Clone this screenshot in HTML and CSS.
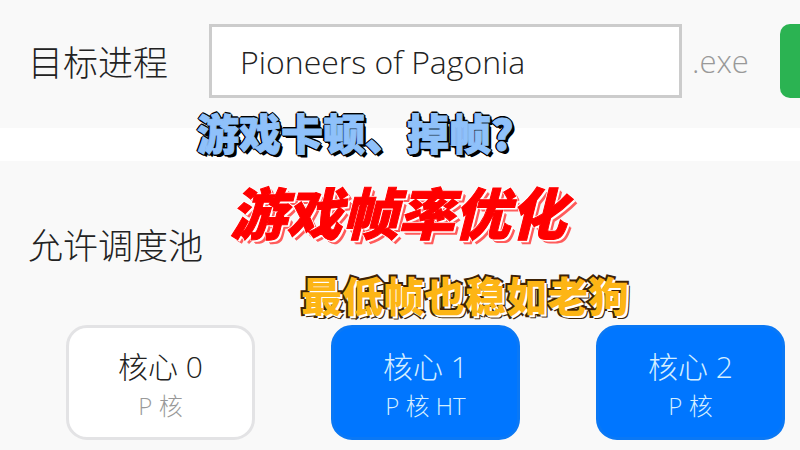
FILE: index.html
```html
<!DOCTYPE html>
<html lang="zh-CN">
<head>
  <meta charset="UTF-8" />
  <meta name="viewport" content="width=device-width, initial-scale=1.0"/>
  <title>游戏帧率优化</title>
  <link rel="stylesheet" href="styles.css">
</head>
<body>
  <div class="app-container">
    <!-- 目标进程 -->
    <form class="panel process-panel">
      <label class="panel-label" for="process-name">目标进程</label>
      <input type="text" id="process-name" class="process-input" value="Pioneers of Pagonia" />
      <span class="process-ext">.exe</span>
      <button type="button" class="btn-start" aria-label="启动"></button>
    </form>

    <!-- 调度池 -->
    <section class="panel pool-panel">
      <h2 class="panel-label">允许调度池</h2>
      <div class="core-list">
        <button type="button" class="core">
          <span class="core-name">核心 0</span>
          <span class="core-type">P 核</span>
        </button>
        <button type="button" class="core active">
          <span class="core-name">核心 1</span>
          <span class="core-type">P 核 HT</span>
        </button>
        <button type="button" class="core active">
          <span class="core-name">核心 2</span>
          <span class="core-type">P 核</span>
        </button>
      </div>
    </section>

    <!-- 标题文字 -->
    <p class="caption caption-question">游戏卡顿、掉帧?</p>
    <h1 class="caption caption-title">游戏帧率优化</h1>
    <p class="caption caption-sub">最低帧也稳如老狗</p>
  </div>
</body>
</html>
```
FILE: styles.css
```css
* { margin: 0; padding: 0; box-sizing: border-box; }
body {
  background-color: #fff;
  color: #222;
  font-family: "Open Sans", "Noto Sans CJK SC", sans-serif;
  font-weight: 300;
  overflow: hidden;
}
button, input { font: inherit; color: inherit; }

.app-container {
  position: relative;
  display: flex;
  flex-direction: column;
  gap: 33px;
  min-height: 100vh;
}

.panel { background-color: #f9f9f9; }

.panel-label {
  padding-top: 4px;
  font-size: 35px;
  line-height: 50px;
  font-weight: 300;
  white-space: nowrap;
}

/* 目标进程 */
.process-panel {
  display: flex;
  align-items: center;
  padding: 24px 0 30px 28px;
  overflow: hidden;
}
.process-input {
  flex: 1;
  min-width: 0;
  height: 74px;
  margin-left: 41px;
  padding: 0 28px;
  border: 3px solid #ccc;
  background: #fff;
  font-size: 32px;
}
.process-ext {
  width: 98px;
  padding-left: 10px;
  color: #999;
  font-size: 31px;
}
.btn-start {
  width: 40px;
  height: 74px;
  margin-right: -20px;
  border: none;
  border-radius: 10px;
  background-color: #2bb352;
}

/* 调度池 */
.pool-panel {
  flex: 1;
  padding: 56px 15px 10px 28px;
}
.core-list {
  display: grid;
  grid-template-columns: repeat(3, 1fr);
  gap: 76px;
  margin-top: 54px;
  padding-left: 38px;
}
.core {
  display: flex;
  flex-direction: column;
  align-items: center;
  justify-content: center;
  height: 115px;
  padding-top: 4px;
  border: 3px solid #e3e3e5;
  border-radius: 21px;
  background: #fff;
  cursor: pointer;
}
.core-name {
  font-size: 30px;
  line-height: 42px;
}
.core-type {
  color: #999;
  font-size: 24px;
  line-height: 36px;
}
.core.active {
  border-color: #0a78f5;
  background: #0076ff;
  color: #d5efff;
}
.core.active .core-type { color: #d5efff; }

/* 浮在界面上的标题：描边加粗字形，阴影画外框 */
.caption {
  position: absolute;
  font-family: "Noto Sans CJK SC", sans-serif;
  font-weight: 900;
  white-space: nowrap;
}
.caption-question {
  top: 102px;
  left: 197px;
  color: #8fc1fa;
  font-size: 42px;
  line-height: 60px;
  -webkit-text-stroke: 1px #8fc1fa;
  text-shadow:
    -1px -1px 0 #000, 1px -1px 0 #000, -1px 1px 0 #000,
    -2px 0 0 #000, 0 -2px 0 #000, 2px 0 0 #000, 0 2px 0 #000,
    2px 2px 0 #000, 3px 3px 0 #000;
}
.caption-title {
  top: 171px;
  left: 230px;
  color: #f00;
  font-size: 56px;
  font-style: italic;
  line-height: 80px;
  -webkit-text-stroke: 1px #f00;
  text-shadow:
    -1px -1px 0 #fff, 1px -1px 0 #fff, -1px 1px 0 #fff,
    1px 1px 0 #fff, 2px 2px 0 #fff,
    3px 3px 0 #ff5c5c, 4px 4px 0 #ff5c5c;
}
.caption-sub {
  top: 264px;
  left: 301px;
  color: #fdb515;
  font-size: 41px;
  line-height: 60px;
  paint-order: stroke fill;
  -webkit-text-stroke: 4px #3d2206;
  text-shadow: 2px 2px 0 #fff, 3px 3px 0 #3d2206;
}
```
